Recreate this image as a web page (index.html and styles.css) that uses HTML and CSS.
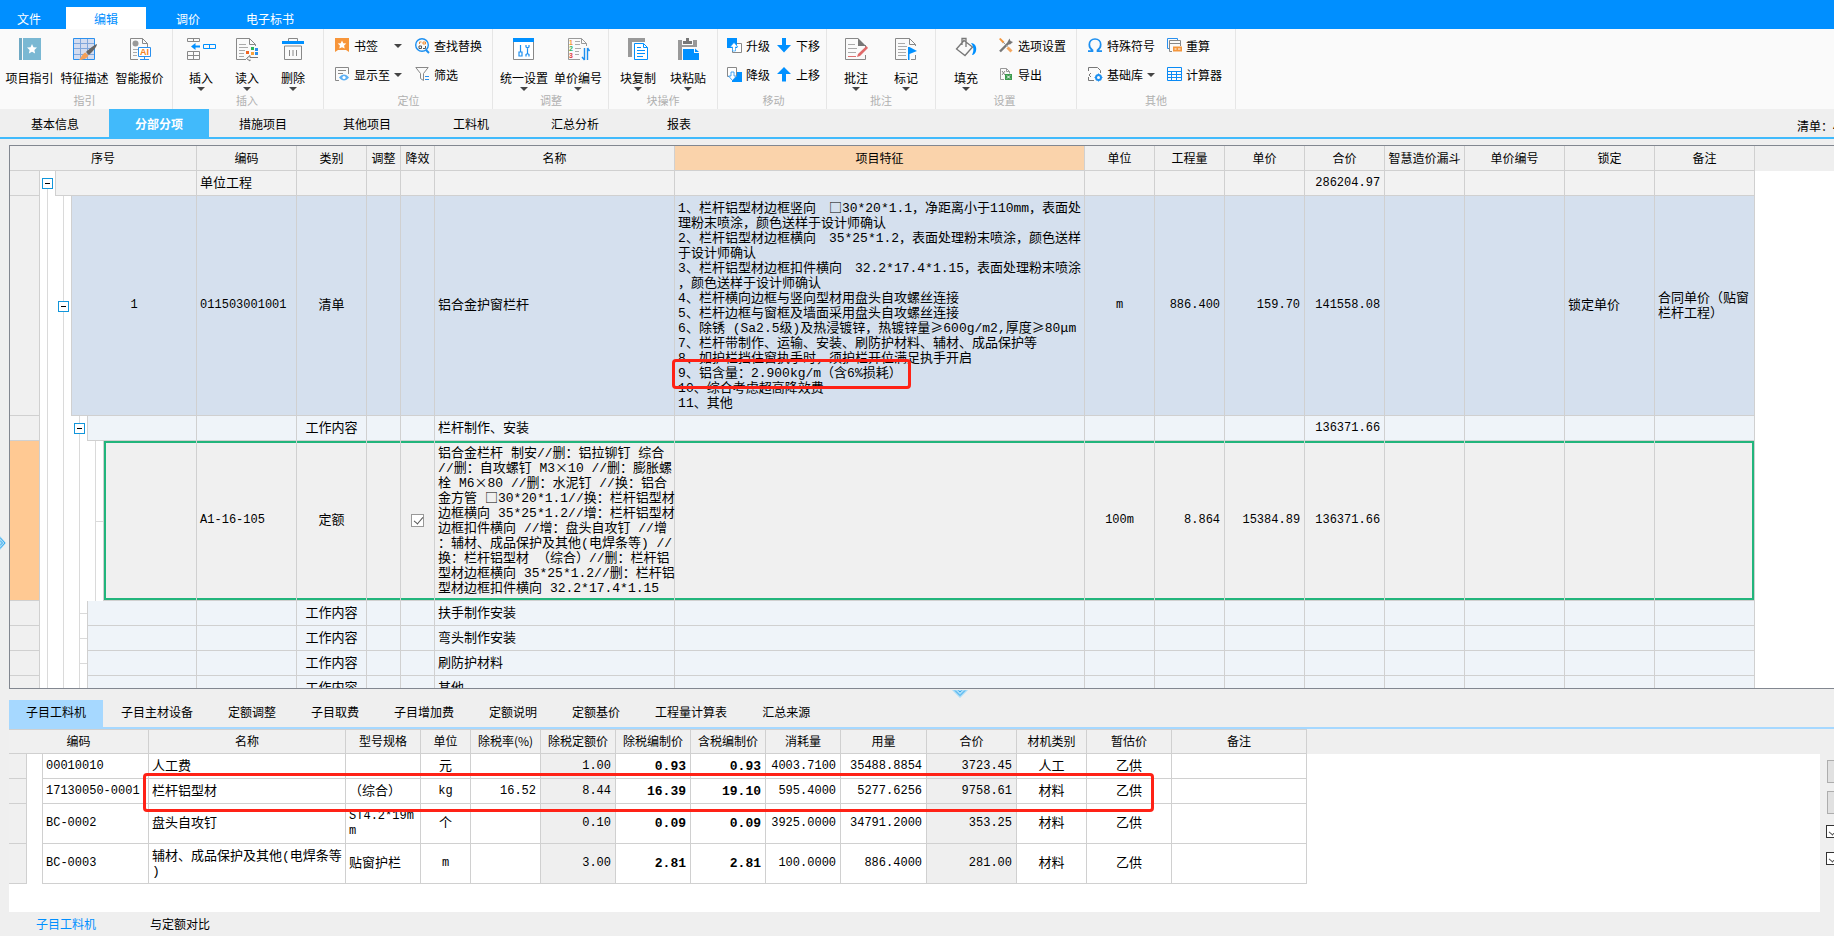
FILE: index.html
```html
<!DOCTYPE html>
<html lang="zh-CN">
<head>
    <meta charset="UTF-8">
    <meta name="viewport" content="width=device-width, initial-scale=1.0">
    <title>分部分项</title>
    <link rel="stylesheet" href="styles.css">
</head>
<body>
    <nav class="menu">
        <button class="menu-file">文件</button>
        <button class="menu-edit active">编辑</button>
        <button class="menu-price">调价</button>
        <button class="menu-bid">电子标书</button>
    </nav>

    <div class="ribbon">
        <section class="group group-guide">
            <div class="tools">
                <button class="tool">
                    <svg width="24" height="24" viewBox="0 0 24 24"><path d="M1 1h3v22H1z" fill="#6fa9c4"/><path d="M5 1h18v22H5z" fill="#7ab8d3"/><path d="M14 7l1.500 3.200 3.500.4-2.600 2.400.7 3.500-3.100-1.800-3.100 1.800.7-3.500L9 10.600l3.500-.4z" fill="#fff"/></svg>
                    <span>项目指引</span>
                </button>
                <button class="tool">
                    <svg width="24" height="24" viewBox="0 0 24 24"><path d="M.5 1.500h21v21H.5z" fill="#d3dcf0" stroke="#2a90ee"/><path d="M1 6.500h20M1 11.500h20M1 17.500h20M7.500 2v20M14.500 2v20" fill="none" stroke="#7fa6dc"/><path d="M24 7c0 3-5 8-8 11l-3-3c3-3 8-7 11-8z" fill="#666"/><path d="M12.500 15.500l3 3c-1.500 3-5.500 4.500-9.500 4.500 2-1.500 3-6.500 6.500-7.500z" fill="#f4a058"/></svg>
                    <span>特征描述</span>
                </button>
                <button class="tool">
                    <svg width="24" height="24" viewBox="0 0 24 24"><path d="M10 22.500H2.500v-21h12l5 5V10M14.500 1.500v5h5" fill="none" stroke="#888"/><circle cx="7.500" cy="6.500" r="3" fill="#999"/><path d="M5 12.500h5M5 15.500h4M5 18.500h4" stroke="#aaa"/><path d="M10.500 10.500h12v9h-12z" fill="#fff" stroke="#2a90ee"/><path d="M16.500 20v2M12 22.500h9" stroke="#2a90ee"/><text x="12" y="18" class="icon-ai">AI</text></svg>
                    <span>智能报价</span>
                </button>
            </div>
            <div class="caption">指引</div>
        </section>

        <section class="group group-insert">
            <div class="tools">
                <button class="tool">
                    <svg width="30" height="24" viewBox="0 0 30 24"><path d="M1.500 1.500h12v3h-12zM7.500 1.500v3M1.500 14.500h12v8h-12zM7.500 14.500v8M1.500 18.500h12" fill="none" stroke="#888"/><path d="M5 9.500L9.500 6v2.500H14v2H9.500V13z" fill="#0090ff"/><path d="M17.500 7.500h12v4h-12zM23.500 7.500v4" fill="none" stroke="#0090ff"/></svg>
                    <span>插入</span><i class="caret"></i>
                </button>
                <button class="tool">
                    <svg width="24" height="24" viewBox="0 0 24 24"><path d="M11 22.500H1.500v-21h13l6 6V9M14.500 1.500v6h6" fill="none" stroke="#888"/><path d="M4 7.500h7M4 10.500h9M4 13.500h6M4 16.500h5M4 19.500h5" stroke="#aaa"/><path d="M16 10h3v3h-3z" fill="#2fb457"/><path d="M11 14h3v3h-3z" fill="#f26522"/><path d="M16 15h3v3h-3z" fill="#f9a13a"/><path d="M20 11h3v3h-3zM20 15h3v3h-3z" fill="#2a90ee"/><path d="M23 20.500h-8v-2l-3.500 3 3.500 2.500v-1.500" fill="none" stroke="#777"/></svg>
                    <span>读入</span><i class="caret"></i>
                </button>
                <button class="tool">
                    <svg width="24" height="24" viewBox="0 0 24 24"><path d="M7.500 4V1.500h9V4M3.500 9v13.500h17V9zM8.500 13v6M12 13v6M15.500 13v6" fill="none" stroke="#888"/><path d="M1 4h22v3H1z" fill="#0090ff"/></svg>
                    <span>删除</span><i class="caret"></i>
                </button>
            </div>
            <div class="caption">插入</div>
        </section>

        <section class="group group-locate">
            <div class="small-tools">
                <button class="small">
                    <svg width="15" height="15" viewBox="0 0 15 15"><path d="M0 0h14v14l-3-2H3l-3 2z" fill="#f7953a"/><path d="M7 2.500l1.300 2.800 3 .3-2.200 2 .6 3L7 9.200l-2.700 1.400.6-3-2.200-2 3-.3z" fill="#fff"/></svg>
                    <span>书签</span><i class="caret push"></i>
                </button>
                <button class="small">
                    <svg width="15" height="15" viewBox="0 0 15 15"><circle cx="7" cy="7" r="6.300" fill="none" stroke="#1c8ff0" stroke-width="1.400"/><path d="M11 12l3 3" stroke="#1c8ff0" stroke-width="2"/><path d="M4.500 6V4h2M8 4h2.500v2H8z" fill="none" stroke="#f08a30"/><path d="M4 8h2.500v2.500H4zM8 10.500h2.500V8" fill="none" stroke="#555"/></svg>
                    <span>查找替换</span>
                </button>
                <button class="small">
                    <svg width="15" height="15" viewBox="0 0 15 15"><path d="M4 13.500H.5V.5h13V7M3 3.500h8M3 6.500h5" fill="none" stroke="#888"/><path d="M4 10.500c3-4 7-4 10 0-3 4-7 4-10 0z" fill="#5cb0f5"/><circle cx="9" cy="10.500" r="1.600" fill="#fff"/></svg>
                    <span>显示至</span><i class="caret push"></i>
                </button>
                <button class="small">
                    <svg width="15" height="15" viewBox="0 0 15 15"><path d="M.8.5h12.400L8.500 6.500v7l-3-2v-5z" fill="none" stroke="#888"/><path d="M10 9.500h4M10 12.500h4" stroke="#2a90ee"/></svg>
                    <span>筛选</span>
                </button>
            </div>
            <div class="caption">定位</div>
        </section>

        <section class="group group-adjust">
            <div class="tools">
                <button class="tool">
                    <svg width="24" height="24" viewBox="0 0 24 24"><path d="M1.500 1.500h20v21h-20z" fill="#fff" stroke="#888"/><path d="M1 1h21v4H1z" fill="#0090ff"/><path d="M8.500 8v7M7 15h3v4H7zM14 8v2l1.500 1L17 10V8M15.500 11v6M14 19.500v-2l1.500-1 1.500 1v2" fill="none" stroke="#1c8ff0" stroke-width="1.200"/></svg>
                    <span>统一设置</span><i class="caret"></i>
                </button>
                <button class="tool">
                    <svg width="24" height="24" viewBox="0 0 24 24"><path d="M14 22.500H2.500v-21h13l5 5V9M15.500 1.500v5h5" fill="none" stroke="#999"/><path d="M9 4.500h5M9 7.500h5M9 11.500h6M9 14.500h4M9 17.500h4" stroke="#aaa"/><text x="3" y="8" class="icon-num c1">1</text><text x="3" y="14" class="icon-num c2">2</text><text x="3" y="21" class="icon-num c3">3</text><path d="M18.500 23V11M16 20l2.500 3M21.500 11v12M21.500 11l2 3" fill="none" stroke="#1c8ff0" stroke-width="1.400"/></svg>
                    <span>单价编号</span><i class="caret"></i>
                </button>
            </div>
            <div class="caption">调整</div>
        </section>

        <section class="group group-block">
            <div class="tools">
                <button class="tool">
                    <svg width="24" height="24" viewBox="0 0 24 24"><path d="M2 1h17v4H6v15H2z" fill="#999"/><path d="M8.500 6.500h9l4 4v12h-13z" fill="#fff" stroke="#0090ff"/><path d="M17.500 6.500v4h4M11 10.500h4M11 13.500h8M11 16.500h8M11 19.500h6" fill="none" stroke="#0090ff"/></svg>
                    <span>块复制</span><i class="caret"></i>
                </button>
                <button class="tool">
                    <svg width="24" height="24" viewBox="0 0 24 24"><path d="M2 3h4v5h11V3h4v7H6v13H2z" fill="#999"/><path d="M7 7V4h3V1h3v3h3v3z" fill="#777"/><path d="M7 12h11v4h5v7H7z" fill="#0090ff"/><path d="M19 11.500l4 3.500h-4z" fill="#0090ff"/></svg>
                    <span>块粘贴</span><i class="caret"></i>
                </button>
            </div>
            <div class="caption">块操作</div>
        </section>

        <section class="group group-move">
            <div class="small-tools">
                <button class="small">
                    <svg width="15" height="15" viewBox="0 0 15 15"><path d="M5.500 5.500h9v9h-9z" fill="#fff" stroke="#888"/><path d="M0 0h10v10H0z" fill="#0090ff"/><path d="M7 4.500l4 4.500H8.500v4h-3V9H3z" fill="#fff" stroke="#0090ff" stroke-width=".6"/></svg>
                    <span>升级</span>
                </button>
                <button class="small">
                    <svg width="15" height="15" viewBox="0 0 15 15"><path d="M5 0h4v7h5l-7 7.500L0 7h5z" fill="#0090ff"/></svg>
                    <span>下移</span>
                </button>
                <button class="small">
                    <svg width="15" height="15" viewBox="0 0 15 15"><path d="M5 5h10v10H5z" fill="#0090ff"/><path d="M.5.5h9v9h-9z" fill="#fff" stroke="#888"/><path d="M4 5h3v4h2.500l-4 4.500L1.500 9H4z" fill="#fff" stroke="#1c8ff0" stroke-width=".8"/></svg>
                    <span>降级</span>
                </button>
                <button class="small">
                    <svg width="15" height="15" viewBox="0 0 15 15"><path d="M7 0l7 7H9v7.500H5V7H0z" fill="#0090ff"/></svg>
                    <span>上移</span>
                </button>
            </div>
            <div class="caption">移动</div>
        </section>

        <section class="group group-note">
            <div class="tools">
                <button class="tool">
                    <svg width="24" height="24" viewBox="0 0 24 24"><path d="M14 1.500H1.500v21h20V18M21.500 11V8" fill="none" stroke="#888"/><path d="M14 1l8 8h-8z" fill="#777"/><path d="M4 7.500h7M4 11.500h9M4 15.500h8" stroke="#aaa"/><path d="M4 19.500h8" stroke="#dd7070"/><path d="M22.500 9l1.500 2-8 8-3 1 1-3z" fill="#e06a6a"/></svg>
                    <span>批注</span><i class="caret"></i>
                </button>
                <button class="tool">
                    <svg width="24" height="24" viewBox="0 0 24 24"><path d="M13 22.500H1.500v-21h14l6 6V9M15.500 1.500v6h6M17 22.500h4.500V18" fill="none" stroke="#888"/><path d="M4 6.500h7M4 9.500h9M4 12.500h8M4 15.500h8M4 18.500h8" stroke="#aaa"/><path d="M14 10h1.500l7.500 4-7.500 3v6H14z" fill="#0090ff"/></svg>
                    <span>标记</span><i class="caret"></i>
                </button>
            </div>
            <div class="caption">批注</div>
        </section>

        <section class="group group-setup">
            <div class="tools">
                <button class="tool">
                    <svg width="24" height="24" viewBox="0 0 24 24"><path d="M10 3.500L18.500 10 11 18.500 2.500 12zM8 8V1.500h4V10" fill="none" stroke="#777" stroke-width="1.300"/><path d="M17 6c4 0 6 4 5 8-.5 2-2 4-4 4 2-4 2-8-1-12z" fill="#0090ff"/></svg>
                    <span>填充</span><i class="caret"></i>
                </button>
                <div class="small-tools">
                    <button class="small">
                        <svg width="15" height="15" viewBox="0 0 15 15"><path d="M1 13.500L9.500 5" stroke="#777" stroke-width="2.400"/><path d="M8.500 4L10.500.500l1 2.500 2.500 1-3 2.500-2.500-.5z" fill="#777"/><path d="M0 1l1.500-1L5.500 4 4 5.500z" fill="#f4963c"/><path d="M4 4l4.500 4.500" stroke="#999"/><path d="M8.500 9.500l4 4" stroke="#f4a860" stroke-width="3"/></svg>
                        <span>选项设置</span>
                    </button>
                    <button class="small">
                        <svg width="15" height="15" viewBox="0 0 15 15"><path d="M5 12.500H1.500v-11h6l3 3v2M7.500 1.500v3h3" fill="none" stroke="#999"/><path d="M3 4l3 4M6 4L3 8" stroke="#888"/><path d="M6 7h7v6H6z" fill="#3c9b4f"/><path d="M8 8.500l3 3M11 8.500l-3 3" stroke="#fff"/></svg>
                        <span>导出</span>
                    </button>
                </div>
            </div>
            <div class="caption">设置</div>
        </section>

        <section class="group group-other">
            <div class="small-tools">
                <button class="small">
                    <svg width="15" height="15" viewBox="0 0 15 15"><path d="M0 13.200h4.500v-1C2.300 11 1.300 9 1.300 6.500c0-3.300 2.300-5.500 5.700-5.500s5.700 2.200 5.700 5.500c0 2.500-1 4.500-3.200 5.700v1H14" fill="none" stroke="#1c8ff0" stroke-width="1.700"/></svg>
                    <span>特殊符号</span>
                </button>
                <button class="small">
                    <svg width="15" height="15" viewBox="0 0 15 15"><path d="M2.500 10.500h-2V.5h10v2" fill="none" stroke="#2a90ee"/><path d="M5 13.500H2.500v-11h11V8M3 5.500h10" fill="none" stroke="#888"/><path d="M6 8.500h9v5H6z" fill="#f4963c"/><path d="M7.500 11h2M11 11h2.500" stroke="#fff"/></svg>
                    <span>重算</span>
                </button>
                <button class="small">
                    <svg width="15" height="15" viewBox="0 0 15 15"><path d="M.5 4V.5h9l3 3V6M6 13.500H.5V10" fill="none" stroke="#777"/><path d="M3 6l-2 2 2 2" fill="none" stroke="#777"/><circle cx="10.500" cy="10.500" r="2.500" fill="none" stroke="#1c8ff0" stroke-width="2"/><path d="M10.500 6.500v2M10.500 12.500v2M6.500 10.500h2M12.500 10.500h2" stroke="#1c8ff0"/></svg>
                    <span>基础库</span><i class="caret"></i>
                </button>
                <button class="small">
                    <svg width="15" height="15" viewBox="0 0 15 15"><path d="M.5.5h14v13H.5zM.5 4.500h14M.5 7.500h14M.5 10.500h14M4.500 4.500v9M9.500 4.500v9" fill="none" stroke="#0a8af5"/></svg>
                    <span>计算器</span>
                </button>
            </div>
            <div class="caption">其他</div>
        </section>
    </div>

    <nav class="sections">
        <button>基本信息</button>
        <button class="active">分部分项</button>
        <button>措施项目</button>
        <button>其他项目</button>
        <button>工料机</button>
        <button>汇总分析</button>
        <button>报表</button>
        <span class="list-info">清单：4</span>
    </nav>

    <div class="workspace">
        <div class="side-handle">
            <svg width="7" height="16" viewBox="0 0 7 16"><path d="M0 1l6 7-6 7" fill="#a8dcf8"/><path d="M0 2.500L5 8l-5 5.500M0 5.500L2.500 8 0 10.500" fill="none" stroke="#3aa8ea"/></svg>
        </div>
        <main class="content">
            <div class="bill">
                <table class="grid">
                    <colgroup>
                        <col class="w30"><col class="w16"><col class="w16"><col class="w16"><col class="w16"><col class="w93">
                        <col class="w100"><col class="w70"><col class="w34"><col class="w34"><col class="w240"><col class="w410">
                        <col class="w70"><col class="w70"><col class="w80"><col class="w80"><col class="w80"><col class="w100"><col class="w90"><col class="w100">
                    </colgroup>
                    <thead>
                        <tr>
                            <th colspan="6">序号</th><th>编码</th><th>类别</th><th>调整</th><th>降效</th><th>名称</th><th class="current">项目特征</th>
                            <th>单位</th><th>工程量</th><th>单价</th><th>合价</th><th>智慧造价漏斗</th><th>单价编号</th><th>锁定</th><th>备注</th>
                        </tr>
                    </thead>
                    <tbody>
                        <tr class="unit">
                            <td class="rownum"></td>
                            <td class="guide start edge"><button class="toggle" aria-label="折叠"></button></td>
                            <td colspan="4"></td>
                            <td>单位工程</td><td></td><td></td><td></td><td></td><td></td><td></td><td></td><td></td>
                            <td class="num">286204.97</td><td></td><td></td><td></td><td></td>
                        </tr>
                        <tr class="item">
                            <td class="rownum"></td>
                            <td class="guide"></td>
                            <td class="guide edge"><button class="toggle" aria-label="折叠"></button></td>
                            <td colspan="3" class="mid num">1</td>
                            <td class="code">011503001001</td><td class="mid">清单</td><td></td><td></td><td>铝合金护窗栏杆</td>
                            <td class="feature">1、栏杆铝型材边框竖向　<span class="wide">□</span>30*20*1.1，净距离小于110mm，表面处<br>理粉末喷涂，颜色送样于设计师确认<br>2、栏杆铝型材边框横向　35*25*1.2，表面处理粉末喷涂，颜色送样<br>于设计师确认<br>3、栏杆铝型材边框扣件横向　32.2*17.4*1.15，表面处理粉末喷涂<br>，颜色送样于设计师确认<br>4、栏杆横向边框与竖向型材用盘头自攻螺丝连接<br>5、栏杆边框与窗框及墙面采用盘头自攻螺丝连接<br>6、除锈 (Sa2.5级)及热浸镀锌，热镀锌量<span class="wide">≥</span>600g/m2,厚度<span class="wide">≥</span>80<span class="wide">μ</span>m<br>7、栏杆带制作、运输、安装、刷防护材料、辅材、成品保护等<br>8、如护栏挡住窗执手时，须护栏开位满足执手开启<br>9、铝含量：2.900kg/m（含6%损耗）<br>10、综合考虑超高降效费<br>11、其他<div class="mark mark-feature"></div></td>
                            <td class="mid code">m</td><td class="num">886.400</td><td class="num">159.70</td><td class="num">141558.08</td>
                            <td></td><td></td><td>锁定单价</td><td>合同单价（贴窗<br>栏杆工程）</td>
                        </tr>
                        <tr class="work">
                            <td class="rownum"></td>
                            <td class="guide"></td><td class="guide"></td>
                            <td class="guide edge"><button class="toggle" aria-label="折叠"></button></td>
                            <td colspan="2"></td>
                            <td></td><td class="mid">工作内容</td><td></td><td></td><td>栏杆制作、安装</td><td></td><td></td><td></td><td></td>
                            <td class="num">136371.66</td><td></td><td></td><td></td><td></td>
                        </tr>
                        <tr class="quota selected">
                            <td class="rownum"></td>
                            <td class="guide"></td><td class="guide"></td><td class="guide"></td>
                            <td class="guide tick"></td>
                            <td class="first"></td>
                            <td class="code">A1-16-105</td><td class="mid">定额</td><td></td>
                            <td class="mid"><input type="checkbox" aria-label="降效" checked></td>
                            <td>铝合金栏杆 制安//删：铝拉铆钉 综合<br>//删：自攻螺钉 M3<span class="wide">×</span>10 //删：膨胀螺<br>栓 M6<span class="wide">×</span>80 //删：水泥钉 //换：铝合<br>金方管 <span class="wide">□</span>30*20*1.1//换：栏杆铝型材<br>边框横向 35*25*1.2//增：栏杆铝型材<br>边框扣件横向 //增：盘头自攻钉 //增<br>：辅材、成品保护及其他(电焊条等) //<br>换：栏杆铝型材 （综合）//删：栏杆铝<br>型材边框横向 35*25*1.2//删：栏杆铝<br>型材边框扣件横向 32.2*17.4*1.15</td>
                            <td></td><td class="mid code">100m</td><td class="num">8.864</td><td class="num">15384.89</td><td class="num">136371.66</td>
                            <td></td><td></td><td></td><td></td>
                        </tr>
                        <tr class="work">
                            <td class="rownum"></td>
                            <td class="guide"></td><td class="guide"></td><td class="guide tick"></td>
                            <td colspan="2"></td>
                            <td></td><td class="mid">工作内容</td><td></td><td></td><td>扶手制作安装</td><td></td><td></td><td></td><td></td><td></td><td></td><td></td><td></td><td></td>
                        </tr>
                        <tr class="work">
                            <td class="rownum"></td>
                            <td class="guide"></td><td class="guide"></td><td class="guide tick"></td>
                            <td colspan="2"></td>
                            <td></td><td class="mid">工作内容</td><td></td><td></td><td>弯头制作安装</td><td></td><td></td><td></td><td></td><td></td><td></td><td></td><td></td><td></td>
                        </tr>
                        <tr class="work">
                            <td class="rownum"></td>
                            <td class="guide"></td><td class="guide"></td><td class="guide tick"></td>
                            <td colspan="2"></td>
                            <td></td><td class="mid">工作内容</td><td></td><td></td><td>刷防护材料</td><td></td><td></td><td></td><td></td><td></td><td></td><td></td><td></td><td></td>
                        </tr>
                        <tr class="work">
                            <td class="rownum"></td>
                            <td class="guide"></td><td class="guide"></td><td class="guide tick"></td>
                            <td colspan="2"></td>
                            <td></td><td class="mid">工作内容</td><td></td><td></td><td>其他</td><td></td><td></td><td></td><td></td><td></td><td></td><td></td><td></td><td></td>
                        </tr>
                    </tbody>
                </table>
            </div>

            <div class="splitter">
                <svg width="16" height="8" viewBox="0 0 16 8"><path d="M0 0h16L8 8z" fill="#a8dcf8"/><path d="M3 .5L8 5.500l5-5M6.500.5L8 2 9.500.5" fill="none" stroke="#3aa8ea"/></svg>
            </div>

            <nav class="detail-tabs">
                <button class="active">子目工料机</button>
                <button>子目主材设备</button>
                <button>定额调整</button>
                <button>子目取费</button>
                <button>子目增加费</button>
                <button>定额说明</button>
                <button>定额基价</button>
                <button>工程量计算表</button>
                <button>汇总来源</button>
            </nav>

            <div class="detail">
                <div class="sheet">
                    <table class="grid">
                        <colgroup>
                            <col class="w18"><col class="w16"><col class="w106"><col class="w197"><col class="w75"><col class="w50"><col class="w70">
                            <col class="w75"><col class="w75"><col class="w75"><col class="w75"><col class="w86"><col class="w90"><col class="w70"><col class="w85"><col class="w135">
                        </colgroup>
                        <thead>
                            <tr>
                                <th colspan="3">编码</th><th>名称</th><th>型号规格</th><th>单位</th><th>除税率(%)</th><th>除税定额价</th><th>除税编制价</th><th>含税编制价</th>
                                <th>消耗量</th><th>用量</th><th>合价</th><th>材机类别</th><th>暂估价</th><th>备注</th>
                            </tr>
                        </thead>
                        <tbody>
                            <tr>
                                <td class="rownum"></td><td class="blank"></td>
                                <td class="code">00010010</td><td>人工费</td><td></td><td class="mid">元</td><td></td><td class="num locked">1.00</td><td class="num bold">0.93</td><td class="num bold">0.93</td>
                                <td class="num">4003.7100</td><td class="num">35488.8854</td><td class="num locked">3723.45</td><td class="mid">人工</td><td class="mid">乙供</td><td></td>
                            </tr>
                            <tr>
                                <td class="rownum"></td><td class="blank"></td>
                                <td class="code">17130050-0001</td><td>栏杆铝型材</td><td>（综合）</td><td class="mid code">kg</td><td class="num">16.52</td><td class="num locked">8.44</td><td class="num bold">16.39</td><td class="num bold">19.10</td>
                                <td class="num">595.4000</td><td class="num">5277.6256</td><td class="num locked">9758.61</td><td class="mid">材料</td><td class="mid">乙供</td><td></td>
                            </tr>
                            <tr class="double">
                                <td class="rownum"></td><td class="blank"></td>
                                <td class="code">BC-0002</td><td>盘头自攻钉</td><td class="code">ST4.2*19m<br>m</td><td class="mid">个</td><td></td><td class="num locked">0.10</td><td class="num bold">0.09</td><td class="num bold">0.09</td>
                                <td class="num">3925.0000</td><td class="num">34791.2000</td><td class="num locked">353.25</td><td class="mid">材料</td><td class="mid">乙供</td><td></td>
                            </tr>
                            <tr class="double">
                                <td class="rownum"></td><td class="blank"></td>
                                <td class="code">BC-0003</td><td>辅材、成品保护及其他(电焊条等<br>)</td><td>贴窗护栏</td><td class="mid code">m</td><td></td><td class="num locked">3.00</td><td class="num bold">2.81</td><td class="num bold">2.81</td>
                                <td class="num">100.0000</td><td class="num">886.4000</td><td class="num locked">281.00</td><td class="mid">材料</td><td class="mid">乙供</td><td></td>
                            </tr>
                        </tbody>
                    </table>
                    <div class="mark mark-row"></div>
                </div>
                <div class="actions">
                    <button class="action" aria-label="操作一"></button>
                    <button class="action" aria-label="操作二"></button>
                    <input type="checkbox" aria-label="选项一" checked>
                    <input type="checkbox" aria-label="选项二" checked>
                </div>
            </div>

            <nav class="foot-tabs">
                <button class="active">子目工料机</button>
                <button>与定额对比</button>
            </nav>
        </main>
    </div>
</body>
</html>
```

FILE: styles.css
```css
* {
    box-sizing: border-box;
}

body {
    margin: 0;
    height: 100vh;
    display: flex;
    flex-direction: column;
    overflow: hidden;
    background-color: #efefef;
    color: #000;
    font-family: "Noto Sans CJK SC", sans-serif;
    font-size: 12px;
    line-height: 16px;
}

button {
    margin: 0;
    padding: 0;
    border: none;
    background: none;
    color: inherit;
    font: inherit;
    white-space: nowrap;
    cursor: pointer;
}

svg {
    display: block;
    flex: none;
    overflow: visible;
}

/* top menu */
.menu {
    display: flex;
    gap: 8px;
    height: 29px;
    padding-top: 7px;
    background-color: #008fff;
    color: #fff;
}

.menu button {
    padding-top: 2px;
}

.menu .menu-file {
    width: 58px;
}

.menu .menu-price {
    width: 68px;
}

.menu .menu-edit,
.menu .menu-bid {
    width: 80px;
}

.menu .active {
    background-color: #fff;
    color: #008fff;
}

/* ribbon */
.ribbon {
    display: flex;
    height: 80px;
    background-color: #fafafa;
}

.group {
    display: flex;
    flex-direction: column;
    border-right: 1px solid #e6e6e6;
    padding: 0 4px;
}

.group-guide {
    padding: 0 5px 0 2px;
}

.group-insert {
    padding: 0 7px 0 5px;
}

.group-locate {
    padding: 0 10px 0 11px;
}

.group-adjust {
    padding-right: 3px;
}

.group-move {
    padding: 0 6px 0 9px;
}

.group-setup {
    padding: 0 10px 0 7px;
}

.group-other {
    padding: 0 11px;
}

.tools {
    display: flex;
    flex: 1;
}

.tool {
    display: flex;
    flex-direction: column;
    align-items: center;
    width: 50px;
    padding-top: 8px;
}

.tool span {
    margin-top: 9px;
    margin-bottom: 1px;
}

.group-guide .tool {
    width: 55px;
}

.group-insert .tool,
.group-setup .tool {
    width: 46px;
}

.group-adjust .tool {
    width: 54px;
}

.small-tools {
    display: grid;
    flex: 1;
    grid-auto-rows: 29px;
    margin-top: 2px;
}

.group-locate .small-tools {
    grid-template-columns: 80px 67px;
}

.group-move .small-tools {
    grid-template-columns: 50px 43px;
}

.group-setup .small-tools {
    grid-template-columns: 67px;
    margin-left: 10px;
}

.group-other .small-tools {
    grid-template-columns: 79px 57px;
}

.small {
    display: flex;
    align-items: center;
    gap: 4px;
}

.caret {
    border: 4px solid transparent;
    border-top-color: #444;
    border-bottom: none;
}

.small .push {
    margin: 0 13px 0 auto;
}

.caption {
    height: 17px;
    color: #b0b0b0;
    font-size: 11px;
    line-height: 17px;
    text-align: center;
}

.icon-ai {
    fill: #f58220;
    font: bold 9px "Liberation Sans", sans-serif;
}

.icon-num {
    font: bold 7px "Liberation Sans", sans-serif;
}

.c1 {
    fill: #f4963c;
}

.c2 {
    fill: #2fb457;
}

.c3 {
    fill: #e03c3c;
}

/* section tabs */
.sections {
    display: flex;
    gap: 4px;
    height: 30px;
    padding-left: 5px;
    border-bottom: 2px solid #40bafc;
}

.sections button {
    width: 100px;
    padding-top: 2px;
}

.sections .active {
    background-color: #41bafb;
    color: #fff;
    font-weight: bold;
}

.list-info {
    width: 37px;
    margin-left: auto;
    overflow: hidden;
    line-height: 34px;
    white-space: nowrap;
}

/* workspace */
.workspace {
    display: flex;
    flex: 1;
    min-height: 0;
}

.side-handle {
    display: flex;
    align-items: center;
    flex: none;
    width: 9px;
    padding-top: 10px;
}

.content {
    display: flex;
    flex: 1;
    flex-direction: column;
    min-width: 0;
    padding-top: 6px;
}

.bill {
    flex: 1;
    min-height: 0;
    overflow: hidden;
    border: 1px solid #828790;
    border-right: none;
    background: linear-gradient(#efefef 25px, #fff 25px);
}

/* grids */
.grid {
    table-layout: fixed;
    width: 0;
    border-collapse: separate;
    border-spacing: 0;
    font-family: "Liberation Mono", "Noto Sans CJK SC", monospace;
    font-size: 13px;
    line-height: 15px;
    white-space: nowrap;
}

.grid th,
.grid td {
    height: 25px;
    padding: 0 4px 0 3px;
    border-right: 1px solid #d0d0d0;
    border-bottom: 1px solid #d0d0d0;
    text-align: left;
    vertical-align: middle;
}

.grid th {
    padding: 0 0 2px;
    background-color: #f0f0f0;
    font-family: "Noto Sans CJK SC", sans-serif;
    font-size: 12px;
    font-weight: normal;
    text-align: center;
}

.grid .current {
    background-color: #fad3ab;
}

.grid .rownum {
    background-color: #f0f0f0;
}

.grid .code {
    font-size: 12px;
}

.grid .num {
    font-size: 12px;
    text-align: right;
}

.grid .mid {
    padding: 0;
    text-align: center;
}

.grid .bold {
    font-size: 13px;
    font-weight: bold;
}

.wide {
    font-family: "Noto Sans CJK SC", sans-serif;
    line-height: 0;
}

.unit td {
    background-color: #f2f2f2;
}

.item td {
    height: 220px;
    background-color: #d5e0ee;
}

.item .feature {
    position: relative;
}

.work td {
    background-color: #eff4f9;
}

.quota td {
    height: 160px;
    background-color: #f0f0f0;
}

.selected .rownum {
    background-color: #ffc993;
}

.selected td:not(.rownum, .guide) {
    box-shadow: inset 0 2px #22b57c, inset 0 -2px #22b57c;
}

.selected td.first {
    box-shadow: inset 2px 2px #22b57c, inset 0 -2px #22b57c;
}

.selected td:not(.rownum, .guide):last-child {
    box-shadow: inset -2px 2px #22b57c, inset 0 -2px #22b57c;
}

/* tree lines */
.grid .guide {
    padding: 0;
    border: none;
    background: linear-gradient(#dadada, #dadada) 7px 0 / 1px 100% no-repeat #fff;
}

.grid .start {
    background-position: 7px 12px;
}

.grid .edge {
    border-right: 1px solid #d0d0d0;
}

.grid .tick {
    border-right: 1px solid #d0d0d0;
    background:
        linear-gradient(#dadada, #dadada) 7px 0 / 1px 100% no-repeat,
        linear-gradient(#dadada, #dadada) 7px 50% / 8px 1px no-repeat #fff;
}

.toggle {
    display: block;
    width: 11px;
    height: 11px;
    margin-left: 2px;
    border: 1px solid #1296db;
    background: linear-gradient(#000, #000) center / 5px 1px no-repeat #fff;
}

input[type="checkbox"] {
    appearance: none;
    display: block;
    width: 13px;
    height: 13px;
    margin: 0 auto;
    border: 1px solid #999;
    background-color: #fff;
}

input[type="checkbox"]:checked::after {
    content: "";
    display: block;
    width: 4px;
    height: 8px;
    margin: 0 0 0 4px;
    border: solid #555;
    border-width: 0 1px 1px 0;
    transform: rotate(40deg);
}

/* red boxes drawn over the cells */
.mark {
    position: absolute;
    border: 3px solid #ff2216;
    border-radius: 4px;
    pointer-events: none;
}

.mark-feature {
    top: 163px;
    left: -3px;
    width: 239px;
    height: 30px;
}

.mark-row {
    top: 44px;
    left: 134px;
    width: 1011px;
    height: 39px;
}

/* lower pane */
.splitter {
    display: flex;
    justify-content: center;
    height: 11px;
    padding: 1px 0 0 76px;
}

.detail-tabs {
    display: flex;
    gap: 1px;
    height: 29px;
    border-bottom: 2px solid #a6d8ff;
}

.detail-tabs button {
    padding: 0 17px 4px;
}

.detail-tabs .active {
    background-color: #a6d8ff;
}

.detail {
    display: flex;
}

.sheet {
    position: relative;
    flex: 1;
    min-width: 0;
    padding-bottom: 28px;
    background: linear-gradient(#efefef 25px, #fff 25px);
}

.sheet th {
    border-top: 1px solid #d0d0d0;
}

.sheet .double td {
    height: 40px;
}

.sheet .blank {
    border-bottom: none;
}

.sheet .locked {
    background-color: #efefef;
}

.actions {
    display: flex;
    flex-direction: column;
    width: 14px;
    padding: 31px 0 0 6px;
    overflow: hidden;
}

.actions .action {
    flex: none;
    width: 60px;
    height: 23px;
    margin: 0 0 8px 1px;
    border: 1px solid #adadad;
    background-color: #e1e1e1;
}

.actions input[type="checkbox"] {
    flex: none;
    margin: 3px 0 11px;
    border-color: #333;
}

.foot-tabs {
    display: flex;
    gap: 54px;
    height: 24px;
    padding-left: 27px;
}

.foot-tabs .active {
    color: #008fff;
}

/* column widths */
.w16 { width: 16px; }
.w18 { width: 18px; }
.w30 { width: 30px; }
.w34 { width: 34px; }
.w50 { width: 50px; }
.w70 { width: 70px; }
.w75 { width: 75px; }
.w80 { width: 80px; }
.w85 { width: 85px; }
.w86 { width: 86px; }
.w90 { width: 90px; }
.w93 { width: 93px; }
.w100 { width: 100px; }
.w106 { width: 106px; }
.w135 { width: 135px; }
.w197 { width: 197px; }
.w240 { width: 240px; }
.w410 { width: 410px; }
```
